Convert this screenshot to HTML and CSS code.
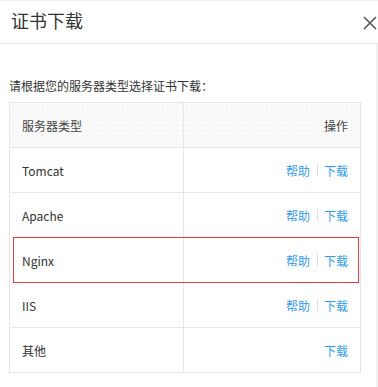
FILE: index.html
```html
<!DOCTYPE html>
<html lang="zh-CN">
<head>
<meta charset="utf-8">
<link rel="stylesheet" href="styles.css">
</head>
<body>
<div class="dialog">
  <div class="header">
    <div class="title">证书下载</div>
    <div class="close">
      <svg width="14" height="14" viewBox="0 0 14 14"><path d="M1 1L13 13M13 1L1 13" stroke="#555" stroke-width="1.6" fill="none"/></svg>
    </div>
  </div>
  <div class="main">
    <div class="content">
      <div class="hint">请根据您的服务器类型选择证书下载：</div>
      <div class="table">
        <div class="row head">
          <div class="cell">服务器类型</div>
          <div class="cell right">操作</div>
        </div>
        <div class="row">
          <div class="cell">Tomcat</div>
          <div class="cell right"><a class="link">帮助</a><span class="sep"></span><a class="link">下载</a></div>
        </div>
        <div class="row">
          <div class="cell">Apache</div>
          <div class="cell right"><a class="link">帮助</a><span class="sep"></span><a class="link">下载</a></div>
        </div>
        <div class="row marked">
          <div class="cell">Nginx</div>
          <div class="cell right"><a class="link">帮助</a><span class="sep"></span><a class="link">下载</a></div>
          <div class="mark"></div>
        </div>
        <div class="row">
          <div class="cell">IIS</div>
          <div class="cell right"><a class="link">帮助</a><span class="sep"></span><a class="link">下载</a></div>
        </div>
        <div class="row">
          <div class="cell">其他</div>
          <div class="cell right"><a class="link">下载</a></div>
        </div>
      </div>
    </div>
    <div class="track"></div>
  </div>
</div>
</body>
</html>
```
FILE: styles.css
```css
* { box-sizing: border-box; }
html, body { margin: 0; padding: 0; background: #fff; }
body {
  font-family: "Noto Sans CJK SC", "Noto Sans", sans-serif;
  color: #333;
  width: 378px;
  height: 387px;
  overflow: hidden;
}
.dialog { display: flex; flex-direction: column; height: 387px; border-top: 1px solid #f2f2f2; }
.header {
  height: 43px;
  border-bottom: 1px solid #e4e4e4;
  display: flex;
  justify-content: space-between;
  align-items: flex-start;
  padding: 0 1px 0 11px;
  flex: none;
}
.title { font-size: 18px; line-height: 24px; padding-top: 7px; color: #333; }
.close { padding-top: 15px; width: 14px; }
.close svg { display: block; }
.main { flex: 1; display: flex; }
.content { flex: 1; padding: 33px 0 0 9px; }
.track { width: 2px; background: #f1f1f1; }
.hint { font-size: 12px; line-height: 18px; color: #333; margin-bottom: 7px; }
.table {
  width: 352px;
  border-left: 1px solid #e6e6e6;
  border-top: 1px solid #e6e6e6;
}
.row { display: grid; grid-template-columns: 174px 177px; position: relative; }
.cell {
  height: 45px;
  border-right: 1px solid #e6e6e6;
  border-bottom: 1px solid #e6e6e6;
  display: flex;
  align-items: center;
  padding: 0 12px;
  font-size: 12px;
  color: #333;
}
.head .cell {
  background-color: #fafafa;
  background-image: radial-gradient(circle, #ececec 0.6px, transparent 0.8px);
  background-size: 5px 5px;
  color: #444;
}
.right { justify-content: flex-end; }
.link { color: #2f9bf0; cursor: pointer; }
.sep { display: inline-block; width: 1px; height: 12px; background: #ddd; margin: 0 6px 0 7px; }
.mark {
  position: absolute;
  left: 3px;
  top: -1px;
  width: 346px;
  height: 46px;
  border: 1px solid #ee3b3b;
  pointer-events: none;
}
```
